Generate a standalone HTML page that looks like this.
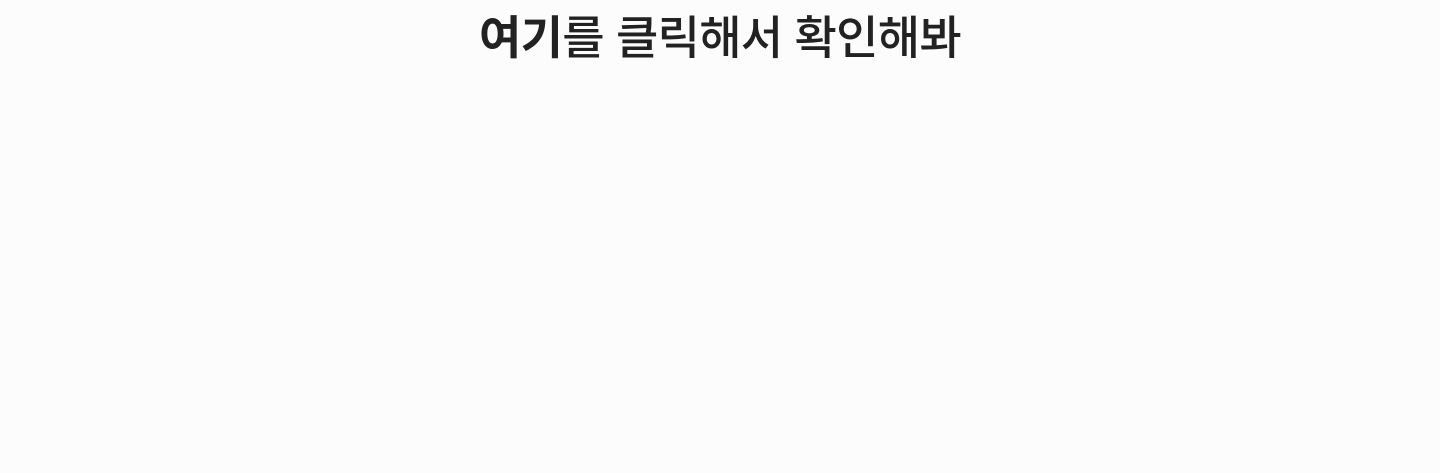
<!DOCTYPE html>
<html lang="ko">
<head>
<meta charset="utf-8">
<style>
  html,body{margin:0;padding:0;}
  body{width:1440px;height:473px;background:#fcfcfc;overflow:hidden;}
  h1{
    margin:0;
    text-align:center;
    font-family:"Liberation Sans","Noto Sans CJK KR",sans-serif;
    font-size:46px;
    line-height:76px;
    font-weight:500;
    color:#222;
    letter-spacing:-0.7px;
  }
  h1 b{font-weight:700;}
</style>
</head>
<body>
  <h1><b>여기</b>를 클릭해서 확인해봐</h1>
</body>
</html>
